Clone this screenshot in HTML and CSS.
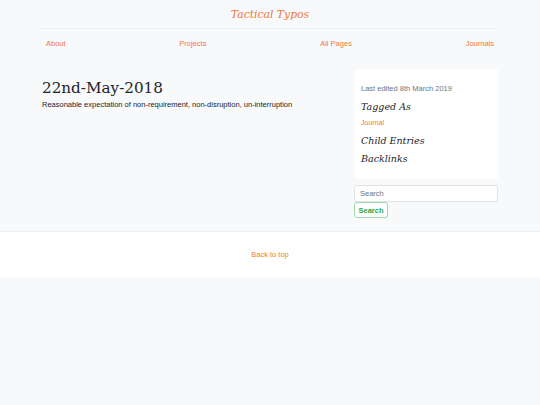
FILE: index.html
```html
<!DOCTYPE html>
<html lang="en">
<head>
<meta charset="utf-8">
<title>22nd-May-2018 - Tactical Typos</title>
<link rel="stylesheet" href="styles.css">
</head>
<body>
<div class="container">
  <header class="site-header">
    <a class="brand" href="#">Tactical Typos</a>
  </header>
  <nav class="nav">
    <a href="#">About</a>
    <a href="#">Projects</a>
    <a href="#">All Pages</a>
    <a href="#">Journals</a>
  </nav>
  <div class="layout">
    <main class="content">
      <h1 class="page-title">22nd-May-2018</h1>
      <p class="lead">Reasonable expectation of non-requirement, non-disruption, un-interruption</p>
    </main>
    <aside class="sidebar">
      <div class="meta-card">
        <p class="edited">Last edited 8th March 2019</p>
        <h2 class="meta-head">Tagged As</h2>
        <a class="tag" href="#">Journal</a>
        <h2 class="meta-head">Child Entries</h2>
        <h2 class="meta-head">Backlinks</h2>
      </div>
      <form class="search">
        <input class="search-input" type="text" placeholder="Search">
        <button class="search-btn" type="button">Search</button>
      </form>
    </aside>
  </div>
</div>
<footer class="footer">
  <a href="#">Back to top</a>
</footer>
</body>
</html>
```
FILE: styles.css
```css
* { box-sizing: border-box; }
body {
  margin: 0;
  background: #f8f9fa;
  font-family: "Liberation Sans", Arial, sans-serif;
  color: #212529;
  font-size: 7.5px;
}
a { color: #ee7a3a; text-decoration: none; }
.container { width: 456px; margin: 0 auto; }
.site-header {
  text-align: center;
  padding: 6px 0 5px;
  border-bottom: 1px solid #eceef0;
}
.brand {
  font-family: "DejaVu Serif", Georgia, serif;
  font-style: italic;
  font-size: 10.8px;
  line-height: 17px;
  color: #ee7a3a;
}
.nav {
  display: flex;
  justify-content: space-between;
  padding: 10px 4px 0;
  font-size: 7.5px;
  line-height: 10px;
}
.layout {
  display: grid;
  grid-template-columns: 1fr 144px;
  gap: 12px;
  margin-top: 20px;
}
.content { padding-top: 9px; }
.page-title {
  font-family: "DejaVu Serif", Georgia, serif;
  font-weight: normal;
  font-size: 15.2px;
  line-height: 20px;
  margin: 0 0 2px;
  color: #212529;
}
.lead { margin: 0; font-size: 7.5px; line-height: 10px; color: #212529; }
.meta-card {
  background: #fff;
  border-radius: 2px;
  padding: 15px 7px 9px;
}
.edited { margin: 0 0 6px; color: #6c757d; font-size: 7.5px; line-height: 10px; }
.meta-head {
  font-family: "DejaVu Serif", Georgia, serif;
  font-style: italic;
  font-weight: normal;
  font-size: 9.5px;
  line-height: 14px;
  margin: 0 0 4px;
  color: #212529;
}
.tag { display: block; font-size: 7px; line-height: 10px; margin: 0 0 6px; }
.search { margin-top: 6px; }
.search-input {
  display: block;
  width: 100%;
  height: 17px;
  border: 1px solid #dfe3e6;
  border-radius: 3px;
  background: #fff;
  padding: 0 5px;
  font-family: "Liberation Sans", Arial, sans-serif;
  font-size: 7.5px;
  color: #495057;
}
.search-input::placeholder { color: #6c757d; }
.search-btn {
  display: block;
  height: 16px;
  padding: 0 3.5px;
  border: 1px solid #9fd8aa;
  border-radius: 3px;
  background: #fff;
  color: #28a745;
  font-family: "Liberation Sans", Arial, sans-serif;
  font-weight: bold;
  font-size: 7.5px;
}
.footer {
  margin-top: 13px;
  background: #fff;
  border-top: 1px solid #eceef0;
  text-align: center;
  padding: 18px 0 18px;
  font-size: 7.5px;
  line-height: 10px;
}
```
